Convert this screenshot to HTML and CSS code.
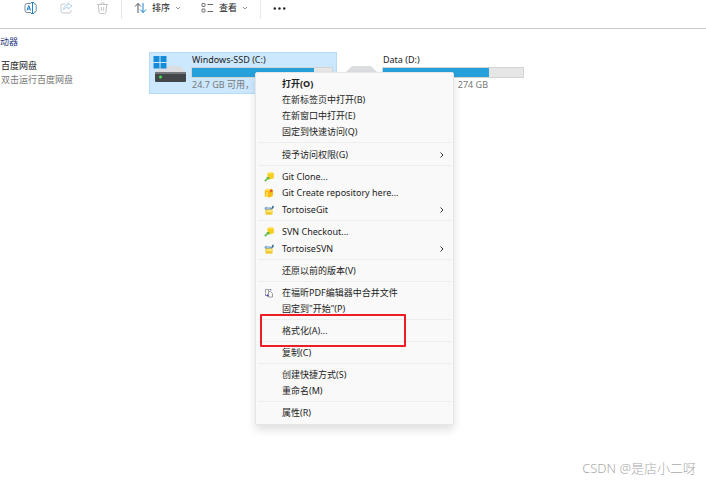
FILE: index.html
```html
<!DOCTYPE html>
<html lang="zh-CN">
<head>
  <meta charset="UTF-8">
  <meta name="viewport" content="width=device-width, initial-scale=1.0">
  <title>此电脑</title>
  <link rel="stylesheet" href="styles.css">
</head>
<body>
  <!-- Shared icons -->
  <svg class="sprite" aria-hidden="true">
    <symbol id="chevron-down" viewBox="0 0 6 6">
      <path d="M1 2l2 2 2-2" fill="none" stroke="#777" stroke-width="0.8"/>
    </symbol>
    <symbol id="chevron-right" viewBox="0 0 6 8">
      <path d="M1.5 1.5L4 4 1.5 6.5" fill="none" stroke="#333" stroke-width="1"/>
    </symbol>
    <symbol id="checkout" viewBox="0 0 10 10">
      <path d="M3.500 1l4.500-.8 1.800 1v5L6 7.200 3.500 6z" fill="#f5cf1c"/>
      <path d="M3.500 1l4.500-.8 1.800 1L6 2z" fill="#ffe65c"/>
      <path d="M.8 9.200L4 6.200" stroke="#5dbb46" stroke-width="1.600"/>
      <path d="M2.200 5h3.200v3.200z" fill="#5dbb46"/>
    </symbol>
    <symbol id="repository" viewBox="0 0 10 10">
      <path d="M.8 2.200L4 .8l4.800 1v6.400L5 9.600.8 8.400z" fill="#f7bd13"/>
      <path d="M.8 2.200L4 .8l4.800 1L5 3z" fill="#ffe45c"/>
      <path d="M3 4v5" stroke="#fff07a" stroke-width="1.200"/>
      <path d="M7.200.6l.6 1.300 1.500.2-1.100 1 .3 1.500-1.300-.8-1.300.8.3-1.500-1.100-1 1.500-.2z" fill="#e3562d"/>
    </symbol>
    <symbol id="tortoise" viewBox="0 0 10 10">
      <path d="M.4 3l2-1.200 4 .6 2 .6-.6 2H1.400z" fill="#6f9fca"/>
      <path d="M2 3.600Q4 1 6 3.600z" fill="#d9e6ee"/>
      <path d="M1.400 4.600h7.200v4.600l-1 .6H2.200l-.8-.6z" fill="#f2ca35"/>
      <path d="M2.600 5.800L6 4.800l2.400 1v1.200H2.600z" fill="#ffe97e"/>
      <path d="M7.600 3.200L8.400.8h1.200v2L8.400 4z" fill="#35648f"/>
    </symbol>
  </svg>

  <!-- Command bar -->
  <header class="toolbar">
    <div class="tool-group file-tools">
      <button class="tool" aria-label="重命名">
        <svg width="13" height="12" viewBox="0 0 13 12" fill="none">
          <path d="M7 1.500H3Q1 1.500 1 3.500v5q0 2 2 2h4M10 1.500q2.200 0 2.200 2v5q0 2-2.200 2" stroke="#7e8b97"/>
          <path d="M8.500.5v11M7 .5h3M7 11.500h3M3 8.500l1.800-5 1.800 5M3.600 7H6" stroke="#1d83cb"/>
        </svg>
      </button>
      <button class="tool" aria-label="共享" disabled>
        <svg width="13" height="12" viewBox="0 0 13 12" fill="none">
          <path d="M5.500 2H3Q1 2 1 4v5q0 2 2 2h6q2 0 2-2V8" stroke="#c5cad0"/>
          <path d="M8 .8L12 4 8 7.200V5.200Q5 5.200 3.600 7.800 4 3 8 2.800z" stroke="#a9cde8" stroke-width=".9"/>
        </svg>
      </button>
      <button class="tool" aria-label="删除" disabled>
        <svg width="13" height="12" viewBox="0 0 13 12" fill="none" stroke="#c3c3c3">
          <path d="M1 2.500h11M4.800 2.500Q4.800.5 6.500.5t1.700 2M2.300 2.500l.8 8q.2 1 1.200 1h4.400q1 0 1.200-1l.8-8M5.300 5v4M7.700 5v4"/>
        </svg>
      </button>
    </div>
    <div class="tool-group">
      <button class="tool">
        <svg width="13" height="12" viewBox="0 0 13 12" fill="none">
          <path d="M4 11V1.500M1 4.500l3-3 3 3" stroke="#555"/>
          <path d="M9 1v9.500M6.200 7.500l2.800 3 3-3" stroke="#1d83cb"/>
        </svg>
        <span>排序</span>
        <svg width="6" height="6"><use href="#chevron-down"/></svg>
      </button>
      <button class="tool">
        <svg width="13" height="12" viewBox="0 0 13 12" fill="none" stroke="#666">
          <rect x="1" y="1.500" width="3" height="3" rx=".6"/>
          <rect x="1" y="7" width="3" height="3" rx=".6"/>
          <path d="M6.500 2.500H12M6.500 9.500H12"/>
        </svg>
        <span>查看</span>
        <svg width="6" height="6"><use href="#chevron-down"/></svg>
      </button>
    </div>
    <div class="tool-group more-tools">
      <button class="tool" aria-label="更多">
        <svg width="13" height="12" viewBox="0 0 13 12" fill="#222">
          <circle cx="1.800" cy="6.500" r="1.200"/><circle cx="6.500" cy="6.500" r="1.200"/><circle cx="11.200" cy="6.500" r="1.200"/>
        </svg>
      </button>
    </div>
  </header>

  <main class="content">
    <h2 class="group-title">动器</h2>
    <div class="drives">
      <a class="app" href="#">
        <span class="name">百度网盘</span>
        <span class="detail">双击运行百度网盘</span>
      </a>
      <a class="drive selected" href="#">
        <svg class="drive-icon" width="34" height="28" viewBox="0 0 34 28">
          <path d="M8 11h19l6 6H2z" fill="#dcdde0"/>
          <rect x="2" y="17" width="31" height="10" rx="1" fill="#44474a"/>
          <path d="M2 17h31v2H2z" fill="#74777a"/>
          <circle cx="7.500" cy="22" r="1.500" fill="#41e34c"/>
          <path d="M.5 1h6v6h-6zM7.500 1h6v6h-6zM.5 8h6v5.500h-6zM7.500 8h6v5.500h-6z" fill="#168bd8"/>
        </svg>
        <span class="drive-info">
          <span class="name">Windows-SSD (C:)</span>
          <span class="usage"><span class="used" style="width: 87%"></span></span>
          <span class="detail">24.7 GB 可用，</span>
        </span>
      </a>
      <a class="drive" href="#">
        <svg class="drive-icon" width="34" height="28" viewBox="0 0 34 28">
          <path d="M8 11h19l6 6H2z" fill="#dcdde0"/>
          <rect x="2" y="17" width="31" height="10" rx="1" fill="#44474a"/>
        </svg>
        <span class="drive-info">
          <span class="name">Data (D:)</span>
          <span class="usage"><span class="used" style="width: 76%"></span></span>
          <span class="detail total">274 GB</span>
        </span>
      </a>
    </div>
  </main>

  <!-- Context menu -->
  <div class="menu" role="menu">
    <div class="menu-group">
      <button class="item default" role="menuitem">打开(O)</button>
      <button class="item" role="menuitem">在新标签页中打开(B)</button>
      <button class="item" role="menuitem">在新窗口中打开(E)</button>
      <button class="item" role="menuitem">固定到快速访问(Q)</button>
    </div>
    <div class="menu-group">
      <button class="item submenu" role="menuitem">授予访问权限(G)<svg class="arrow"><use href="#chevron-right"/></svg></button>
    </div>
    <div class="menu-group">
      <button class="item" role="menuitem"><svg class="icon"><use href="#checkout"/></svg>Git Clone...</button>
      <button class="item" role="menuitem"><svg class="icon"><use href="#repository"/></svg>Git Create repository here...</button>
      <button class="item submenu" role="menuitem"><svg class="icon"><use href="#tortoise"/></svg>TortoiseGit<svg class="arrow"><use href="#chevron-right"/></svg></button>
    </div>
    <div class="menu-group">
      <button class="item" role="menuitem"><svg class="icon"><use href="#checkout"/></svg>SVN Checkout...</button>
      <button class="item submenu" role="menuitem"><svg class="icon"><use href="#tortoise"/></svg>TortoiseSVN<svg class="arrow"><use href="#chevron-right"/></svg></button>
    </div>
    <div class="menu-group">
      <button class="item" role="menuitem">还原以前的版本(V)</button>
    </div>
    <div class="menu-group">
      <button class="item" role="menuitem">
        <svg class="icon" viewBox="0 0 10 10" fill="none">
          <path d="M1.500 5V1.500h3v2M4.500 3.500h2l2 2v3.500h-4z" stroke="#85858d" stroke-width=".8"/>
          <path d="M1.500 5.500v2h1.500M5.500 1.500h1.500v1" stroke="#5b5ba5" stroke-width=".8"/>
          <path d="M3 6l1.800 1.500L3 9z" fill="#4949a0"/>
        </svg>在福昕PDF编辑器中合并文件</button>
      <button class="item" role="menuitem">固定到"开始"(P)</button>
    </div>
    <div class="menu-group marked">
      <button class="item" role="menuitem">格式化(A)...</button>
    </div>
    <div class="menu-group">
      <button class="item" role="menuitem">复制(C)</button>
    </div>
    <div class="menu-group">
      <button class="item" role="menuitem">创建快捷方式(S)</button>
      <button class="item" role="menuitem">重命名(M)</button>
    </div>
    <div class="menu-group">
      <button class="item" role="menuitem">属性(R)</button>
    </div>
  </div>

  <div class="watermark">CSDN @是店小二呀</div>
</body>
</html>
```

FILE: styles.css
```css
/* Base */
* {
  box-sizing: border-box;
}
body {
  margin: 0;
  min-height: 100vh;
  position: relative;
  background: #ffffff;
  color: #222222;
  font-family: "Noto Sans", "Noto Sans CJK SC", sans-serif;
  font-size: 9px;
  line-height: 14px;
}
button {
  border: none;
  background: none;
  color: inherit;
  font: inherit;
}
a {
  color: inherit;
  text-decoration: none;
}
.sprite {
  position: absolute;
  width: 0;
  height: 0;
}

/* Toolbar */
.toolbar {
  display: flex;
  align-items: flex-start;
  height: 29px;
  border-bottom: 1px solid #c8c8c8;
}
.tool-group {
  display: flex;
  align-items: center;
  gap: 20px;
  height: 19px;
  padding: 0 12px 3px;
  border-right: 1px solid #e9e9e9;
}
.file-tools {
  gap: 23px;
  padding-left: 24px;
}
.more-tools {
  border-right: none;
}
.tool {
  display: flex;
  align-items: center;
  gap: 5px;
  padding: 0;
}

/* Drives */
.content {
  padding-top: 6px;
}
.group-title {
  margin: 0;
  color: #26367d;
  font-size: 9px;
  font-weight: 400;
}
.drives {
  display: grid;
  grid-template-columns: 146px 188px 188px;
  gap: 3px;
  margin-top: 3px;
}
.app {
  display: flex;
  flex-direction: column;
  padding: 7px 1px;
}
.drive {
  display: flex;
  gap: 4px;
  padding: 0 3px;
  border: 1px solid transparent;
}
.drive.selected {
  background: #cce8ff;
  border-color: #b5dcf8;
}
.drive-icon {
  flex: none;
  margin-top: 2px;
}
.drive-info {
  flex: 1;
  display: flex;
  flex-direction: column;
}
.name {
  color: #222222;
}
.detail {
  color: #777777;
}
.drive .name,
.drive .detail {
  padding-left: 1px;
}
.usage {
  height: 11px;
  background: #e6e6e6;
  border: 1px solid #d4d4d4;
}
.used {
  display: block;
  height: 100%;
  background: #26a0da;
}
.total {
  align-self: flex-end;
  margin-right: 36px;
}

/* Context menu */
.menu {
  position: absolute;
  top: 72px;
  left: 255px;
  width: 199px;
  padding: 3px 2px;
  background: #f9f9f9;
  border: 1px solid #e6e6e6;
  border-radius: 2px;
  box-shadow: 0 5px 8px rgba(0, 0, 0, 0.12);
}
.menu-group + .menu-group {
  margin-top: 2px;
  padding-top: 3px;
  border-top: 1px solid #ededed;
}
.item {
  display: grid;
  grid-template-columns: 18px 1fr 6px;
  align-items: center;
  width: 100%;
  height: 16px;
  padding: 0 6px;
  text-align: left;
  white-space: nowrap;
}
.item.default {
  font-weight: 700;
}
.item.submenu {
  height: 17px;
}
.item::before {
  content: "";
}
.item:has(.icon)::before {
  display: none;
}
.item:hover {
  background: #eeeeee;
}
.icon {
  width: 10px;
  height: 10px;
}
.arrow {
  width: 6px;
  height: 8px;
}

/* Red frame over the format entry */
.marked {
  position: relative;
}
.marked::after {
  content: "";
  position: absolute;
  inset: -6px 45px -8px 2px;
  border: 2px solid #ee1c25;
  border-radius: 1px;
  pointer-events: none;
}

.watermark {
  position: absolute;
  right: 10px;
  bottom: 5px;
  color: #aaaaaa;
  font-size: 13px;
  font-weight: 300;
  line-height: 18px;
}
```
